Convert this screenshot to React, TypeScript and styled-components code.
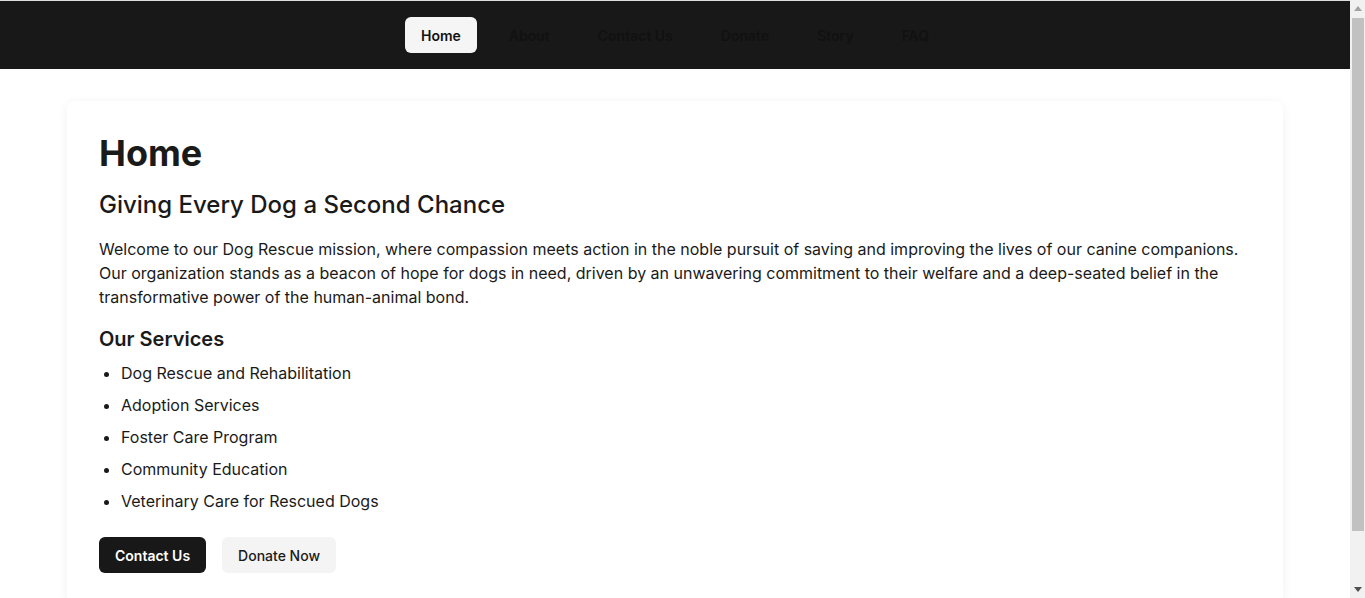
import React from "react";
import styled, { createGlobalStyle } from "styled-components";

const Global = createGlobalStyle`
  html, body { margin: 0; padding: 0; }
  body {
    font-family: Inter, "Noto Sans", sans-serif;
    background: #ffffff;
    color: #1a1a1a;
    border-top: 1px solid #dcdcdc;
    padding-right: 15px;
  }
  * { box-sizing: border-box; }
`;

const ScrollBar = styled.div`
  position: fixed;
  top: 0;
  right: 0;
  width: 15px;
  height: 100vh;
  background: #f1f1f1;
  display: flex;
  flex-direction: column;
  z-index: 10;
`;

const ScrollArrow = styled.div`
  height: 17px;
  display: flex;
  align-items: center;
  justify-content: center;
  flex-shrink: 0;
`;

const ScrollTrack = styled.div`
  flex: 1;
  padding: 1px 1px 0 2px;
`;

const ScrollThumb = styled.div`
  height: 513px;
  background: #c1c1c1;
`;

const NavBar = styled.nav`
  background: #181818;
  height: 68px;
  display: flex;
  justify-content: center;
  align-items: center;
  gap: 16px;
`;

const NavLink = styled.a<{ $active?: boolean }>`
  display: inline-flex;
  align-items: center;
  height: 36px;
  padding: 0 16px;
  border-radius: 6px;
  font-size: 14px;
  font-weight: 600;
  text-decoration: none;
  cursor: pointer;
  color: #111111;
  background: ${(p) => (p.$active ? "#f5f5f5" : "transparent")};
`;

const Main = styled.main`
  padding: 32px 0 64px;
  display: flex;
  justify-content: center;
`;

const Card = styled.section`
  width: 1216px;
  background: #fff;
  border-radius: 8px;
  box-shadow: 0 2px 12px rgba(0, 0, 0, 0.06);
  padding: 28px 32px 32px;
`;

const Title = styled.h1`
  margin: 0 0 12px;
  font-size: 36px;
  line-height: 48px;
  font-weight: 700;
  color: #1a1a1a;
`;

const Subtitle = styled.h2`
  margin: 0 0 16px;
  font-size: 24px;
  line-height: 32px;
  font-weight: 500;
  color: #1a1a1a;
`;

const Paragraph = styled.p`
  margin: 0 0 16px;
  font-size: 16px;
  line-height: 24px;
  color: #1a1a1a;
`;

const SectionTitle = styled.h3`
  margin: 0 0 4px;
  font-size: 20px;
  line-height: 28px;
  font-weight: 600;
  color: #1a1a1a;
`;

const List = styled.ul`
  margin: 0 0 20px;
  padding-left: 22px;
`;

const Item = styled.li`
  font-size: 16px;
  line-height: 24px;
  padding: 4px 0;
  color: #1a1a1a;
`;

const Actions = styled.div`
  display: flex;
  gap: 16px;
`;

const Button = styled.button<{ $primary?: boolean }>`
  height: 36px;
  padding: 0 16px;
  border: none;
  border-radius: 6px;
  font-family: Inter, "Noto Sans", sans-serif;
  font-size: 14px;
  font-weight: ${(p) => (p.$primary ? 600 : 500)};
  background: ${(p) => (p.$primary ? "#181818" : "#f4f4f4")};
  color: ${(p) => (p.$primary ? "#ffffff" : "#1a1a1a")};
  cursor: pointer;
`;

const links = ["Home", "About", "Contact Us", "Donate", "Story", "FAQ"];
const services = [
  "Dog Rescue and Rehabilitation",
  "Adoption Services",
  "Foster Care Program",
  "Community Education",
  "Veterinary Care for Rescued Dogs",
];

export default function App() {
  return (
    <>
      <Global />
      <NavBar>
        {links.map((l, i) => (
          <NavLink key={l} $active={i === 0}>
            {l}
          </NavLink>
        ))}
      </NavBar>
      <Main>
        <Card>
          <Title>Home</Title>
          <Subtitle>Giving Every Dog a Second Chance</Subtitle>
          <Paragraph>
            Welcome to our Dog Rescue mission, where compassion meets action in the noble pursuit of saving and
            improving the lives of our canine companions. Our organization stands as a beacon of hope for dogs in
            need, driven by an unwavering commitment to their welfare and a deep-seated belief in the
            transformative power of the human-animal bond.
          </Paragraph>
          <SectionTitle>Our Services</SectionTitle>
          <List>
            {services.map((s) => (
              <Item key={s}>{s}</Item>
            ))}
          </List>
          <Actions>
            <Button $primary>Contact Us</Button>
            <Button>Donate Now</Button>
          </Actions>
        </Card>
      </Main>
      <ScrollBar aria-hidden>
        <ScrollArrow>
          <svg width="8" height="5" viewBox="0 0 8 5">
            <polygon points="0,5 8,5 4,0" fill="#a3a3a3" />
          </svg>
        </ScrollArrow>
        <ScrollTrack>
          <ScrollThumb />
        </ScrollTrack>
        <ScrollArrow>
          <svg width="8" height="5" viewBox="0 0 8 5">
            <polygon points="0,0 8,0 4,5" fill="#505050" />
          </svg>
        </ScrollArrow>
      </ScrollBar>
    </>
  );
}
